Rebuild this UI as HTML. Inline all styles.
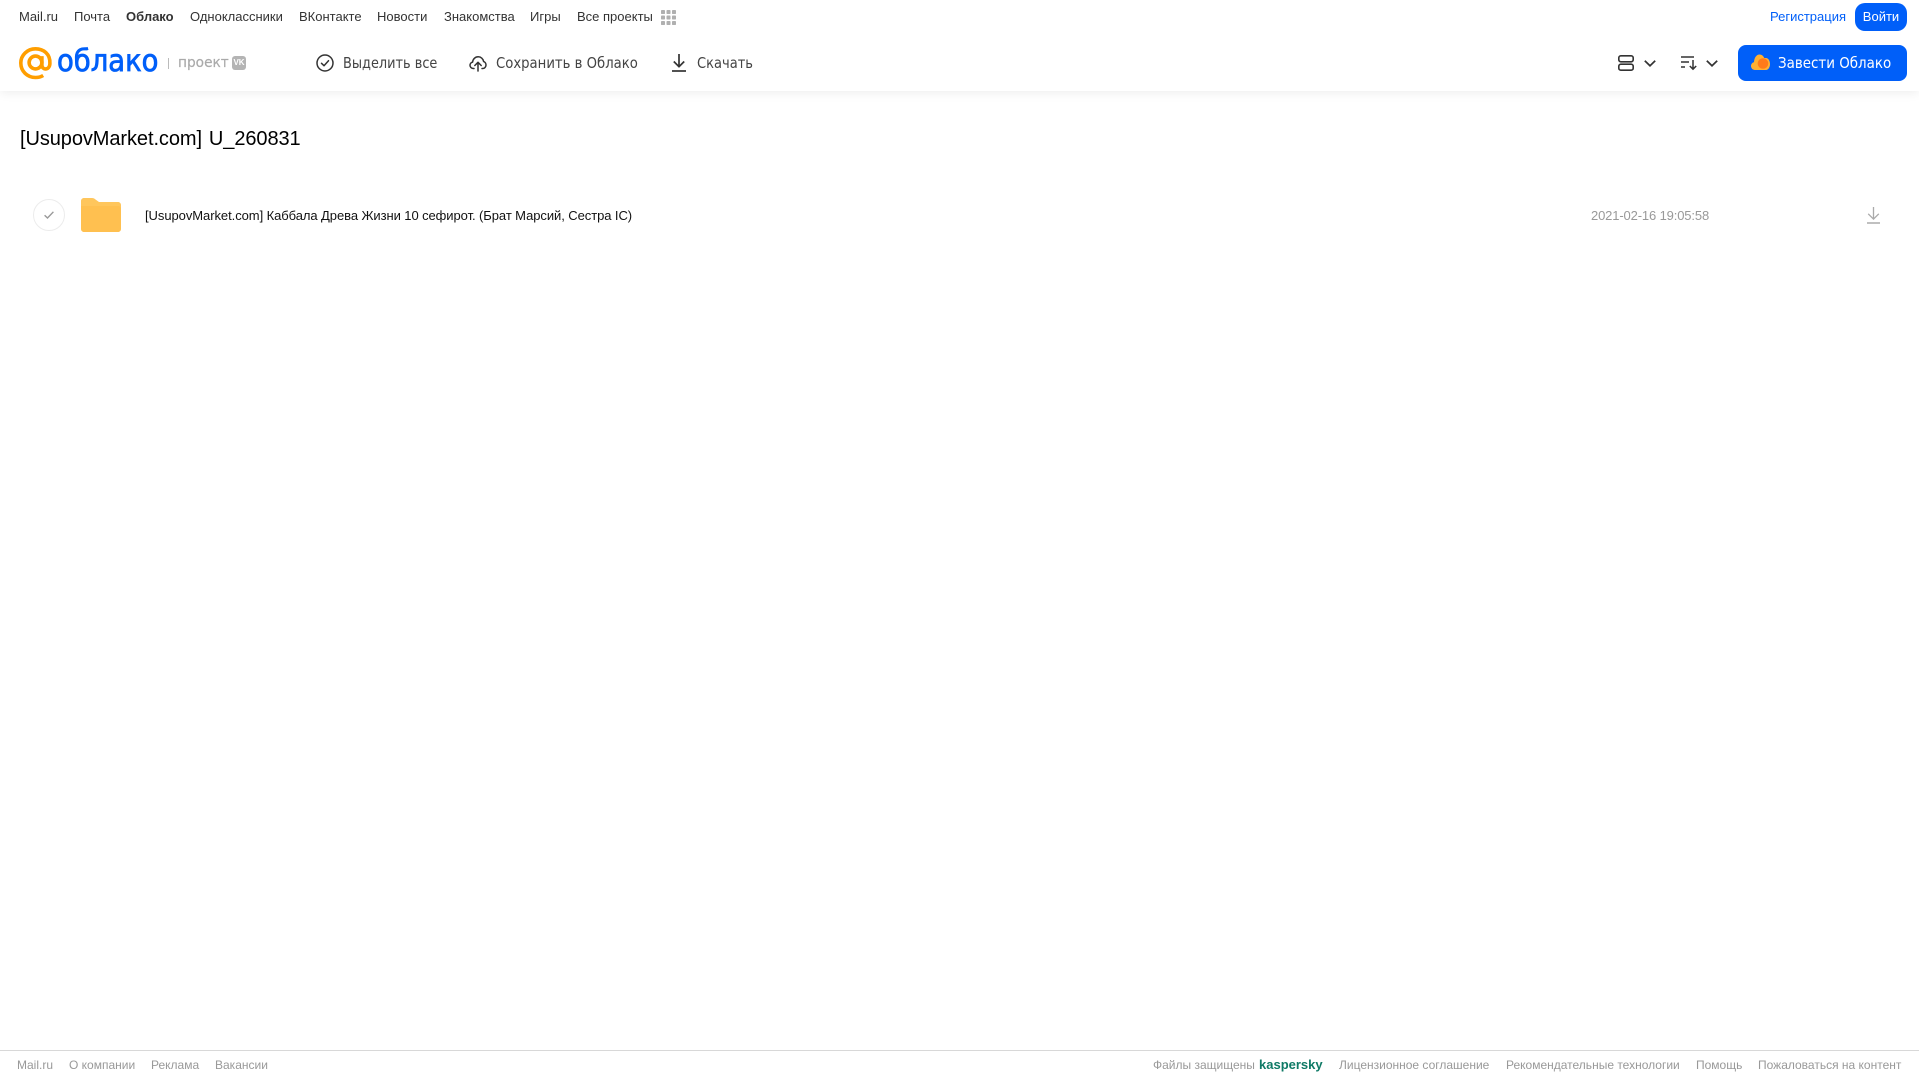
<!DOCTYPE html>
<html lang="ru">
<head>
<meta charset="utf-8">
<title>[UsupovMarket.com] U_260831</title>
<style>
html,body{margin:0;padding:0;background:#fff}
body{width:1919px;height:1079px;position:relative;overflow:hidden;font-family:"Liberation Sans",Arial,sans-serif}
.t{position:absolute;white-space:nowrap}
.n{top:9px;font-size:13px;line-height:15px;color:#333}
.b{top:54px;font-size:15px;line-height:18px;color:#444;font-family:"DejaVu Sans","Liberation Sans",sans-serif;transform-origin:0 50%}
.f{top:1058px;font-size:12px;line-height:14px;color:#999}
svg{position:absolute;overflow:visible}
#hd{position:absolute;left:0;top:0;width:1919px;height:91px;background:#fff;box-shadow:0 2px 10px rgba(0,0,0,.07)}
</style>
</head>
<body>
<div id="hd"></div>

<span class="t n" style="left:19px">Mail.ru</span>
<span class="t n" style="left:74px">Почта</span>
<span class="t n" style="left:126px;font-weight:bold">Облако</span>
<span class="t n" style="left:190px">Одноклассники</span>
<span class="t n" style="left:299px">ВКонтакте</span>
<span class="t n" style="left:377px">Новости</span>
<span class="t n" style="left:444px">Знакомства</span>
<span class="t n" style="left:530px">Игры</span>
<span class="t n" style="left:577px">Все проекты</span>
<svg style="left:661px;top:10px" width="15" height="15" fill="#b0b0b0">
<rect x="0" y="0" width="4" height="4" rx=".8"/><rect x="5.500" y="0" width="4" height="4" rx=".8"/><rect x="11" y="0" width="4" height="4" rx=".8"/>
<rect x="0" y="5.500" width="4" height="4" rx=".8"/><rect x="5.500" y="5.500" width="4" height="4" rx=".8"/><rect x="11" y="5.500" width="4" height="4" rx=".8"/>
<rect x="0" y="11" width="4" height="4" rx=".8"/><rect x="5.500" y="11" width="4" height="4" rx=".8"/><rect x="11" y="11" width="4" height="4" rx=".8"/>
</svg>

<span class="t n" style="left:1770px;color:#005ff9">Регистрация</span>
<div class="t" style="left:1855px;top:3px;width:52px;height:28px;background:#005ff9;border-radius:10px;color:#fff;font-size:13px;line-height:28px;text-align:center">Войти</div>

<svg style="left:19px;top:47px" width="33" height="33" viewBox="0 0 33 33" fill="none" stroke="#ff9e00" stroke-width="3.600">
<circle cx="16.500" cy="15.500" r="6.400"/>
<path d="M22.900 9.100V18c0 5.500 7.800 5.500 8-1.500C31.400 7 24.500 1.800 16.500 1.800 8.500 1.800 1.800 8 1.800 16c0 8.500 6.700 14.500 14.700 14.500 3 0 5.500-.7 7.700-2"/>
</svg>
<span class="t" style="left:57px;top:45px;font-size:30px;line-height:34px;color:#005ff9;font-family:'DejaVu Sans',sans-serif;transform:scaleX(.915);transform-origin:0 50%;-webkit-text-stroke:.8px #005ff9">облако</span>
<div class="t" style="left:168px;top:58px;width:1px;height:11px;background:#bbb"></div>
<span class="t" style="left:178px;top:55px;font-size:14px;line-height:17px;color:#aaa;font-family:'DejaVu Sans',sans-serif;transform:scaleX(.98);transform-origin:0 50%;-webkit-text-stroke:.2px #aaa">проект</span>
<div class="t" style="left:232px;top:56px;width:14px;height:14px;background:#b4b4b4;border-radius:3px;color:#fff;font-size:8px;line-height:14px;text-align:center;font-weight:bold">VK</div>

<svg style="left:316px;top:54px" width="18" height="18" viewBox="0 0 18 18" fill="none" stroke="#333" stroke-width="1.500">
<circle cx="9" cy="9" r="8"/><path d="M5.500 9.300l2.500 2.400 4.500-5" stroke-linecap="round" stroke-linejoin="round"/>
</svg>
<span class="t b" style="left:343px;transform:scaleX(.86)">Выделить все</span>

<svg style="left:469px;top:54px" width="18" height="18" viewBox="0 0 18 18" fill="none" stroke="#333" stroke-width="1.500" stroke-linecap="round" stroke-linejoin="round">
<path d="M5 14.500H4.200C2.300 14.500 1 13 1 11.300c0-1.600 1.100-2.900 2.600-3.200C3.900 5 6.200 2.800 9.200 2.800c2.800 0 5 2 5.400 4.700 1.400.4 2.400 1.900 2.400 3.500 0 1.900-1.400 3.500-3.400 3.500H13"/>
<path d="M9 17V8.500M5.800 11.500L9 8.300l3.200 3.200"/>
</svg>
<span class="t b" style="left:496px;transform:scaleX(.882)">Сохранить в Облако</span>

<svg style="left:672px;top:54px" width="14" height="18" viewBox="0 0 14 18" fill="none" stroke="#333" stroke-width="1.700">
<path d="M7 0v12.500M1.800 7.500L7 12.700l5.200-5.200"/><path d="M0 17h14"/>
</svg>
<span class="t b" style="left:697px;transform:scaleX(.87)">Скачать</span>

<svg style="left:1618px;top:55px" width="16" height="16" viewBox="0 0 16 16" fill="none" stroke="#333" stroke-width="1.600">
<rect x=".8" y=".8" width="14.400" height="6" rx="2"/><rect x=".8" y="9.200" width="14.400" height="6" rx="2"/>
</svg>
<svg style="left:1644px;top:60px" width="12" height="7" viewBox="0 0 12 7" fill="none" stroke="#333" stroke-width="1.700"><path d="M.8.800L6 5.800 11.200.8"/></svg>
<svg style="left:1681px;top:56px" width="16" height="14" viewBox="0 0 16 14" fill="none" stroke="#333" stroke-width="1.500">
<path d="M0 1h13M0 6h8M0 11h4"/><path d="M12 4v9M8.800 10l3.200 3.200 3.200-3.200"/>
</svg>
<svg style="left:1706px;top:60px" width="12" height="7" viewBox="0 0 12 7" fill="none" stroke="#333" stroke-width="1.700"><path d="M.8.800L6 5.800 11.200.8"/></svg>

<div class="t" style="left:1738px;top:45px;width:169px;height:36px;background:#005ff9;border-radius:8px"></div>
<svg style="left:1751px;top:54px" width="19" height="17" viewBox="0 0 19 17">
<path d="M4 16C1.800 16 0 14.200 0 12c0-2 1.400-3.500 3-3.900C3.300 3.500 5.500.5 8.500.5c2.300 0 4 1.500 4.700 3.500H15c2.200 0 4 2.600 4 6s-1.800 6-4 6z" fill="#ffb033"/>
<circle cx="12" cy="9.500" r="5.300" fill="#ff7a1a"/>
</svg>
<span class="t" style="left:1778px;top:54px;font-size:15px;line-height:18px;color:#fff;font-family:'DejaVu Sans',sans-serif;transform:scaleX(.895);transform-origin:0 50%">Завести Облако</span>

<span class="t" style="left:20px;top:127px;font-size:20px;line-height:25px;color:#000;letter-spacing:-.08px;word-spacing:1.500px">[UsupovMarket.com] U_260831</span>

<div class="t" style="left:33px;top:199px;width:30px;height:30px;border:1px solid #ececec;border-radius:50%"></div>
<svg style="left:44px;top:211px" width="10" height="8" viewBox="0 0 10 8" fill="none" stroke="#999" stroke-width="1.400"><path d="M.6 4.200L3.500 7 9.400.8"/></svg>
<svg style="left:81px;top:198px" width="40" height="34" viewBox="0 0 40 34">
<path d="M0 3C0 1.300 1.300 0 3 0h8c1.500 0 2.500.5 3.500 1.500L18 4h19c1.700 0 3 1.300 3 3v5H0z" fill="#ffc65c"/>
<path d="M0 8h37c1.700 0 3 1.300 3 3v20c0 1.700-1.300 3-3 3H3c-1.700 0-3-1.300-3-3z" fill="#ffc050"/>
</svg>
<span class="t" style="left:145px;top:208px;font-size:13px;line-height:16px;color:#111;letter-spacing:-.06px;word-spacing:-.1px">[UsupovMarket.com] Каббала Древа Жизни 10 сефирот. (Брат Марсий, Сестра IC)</span>
<span class="t" style="left:1591px;top:208px;font-size:13px;line-height:15px;color:#999;letter-spacing:-.14px">2021-02-16 19:05:58</span>
<svg style="left:1867px;top:207px" width="13" height="17" viewBox="0 0 13 17" fill="none" stroke="#aaa" stroke-width="1.300">
<path d="M6.500 0v12M1.200 6.800l5.300 5.300 5.300-5.300"/><path d="M0 16h13" stroke-width="1.500"/>
</svg>

<div class="t" style="left:0;top:1050px;width:1919px;height:1px;background:#d8d8d8"></div>
<span class="t f" style="left:17px">Mail.ru</span>
<span class="t f" style="left:69px">О компании</span>
<span class="t f" style="left:151px">Реклама</span>
<span class="t f" style="left:215px">Вакансии</span>
<span class="t f" style="left:1153px">Файлы защищены</span>
<span class="t f" style="left:1259px;font-size:13px;font-weight:bold;color:#0f7a66">kaspersky</span>
<span class="t f" style="left:1339px">Лицензионное соглашение</span>
<span class="t f" style="left:1506px">Рекомендательные технологии</span>
<span class="t f" style="left:1696px">Помощь</span>
<span class="t f" style="left:1758px">Пожаловаться на контент</span>
</body>
</html>
